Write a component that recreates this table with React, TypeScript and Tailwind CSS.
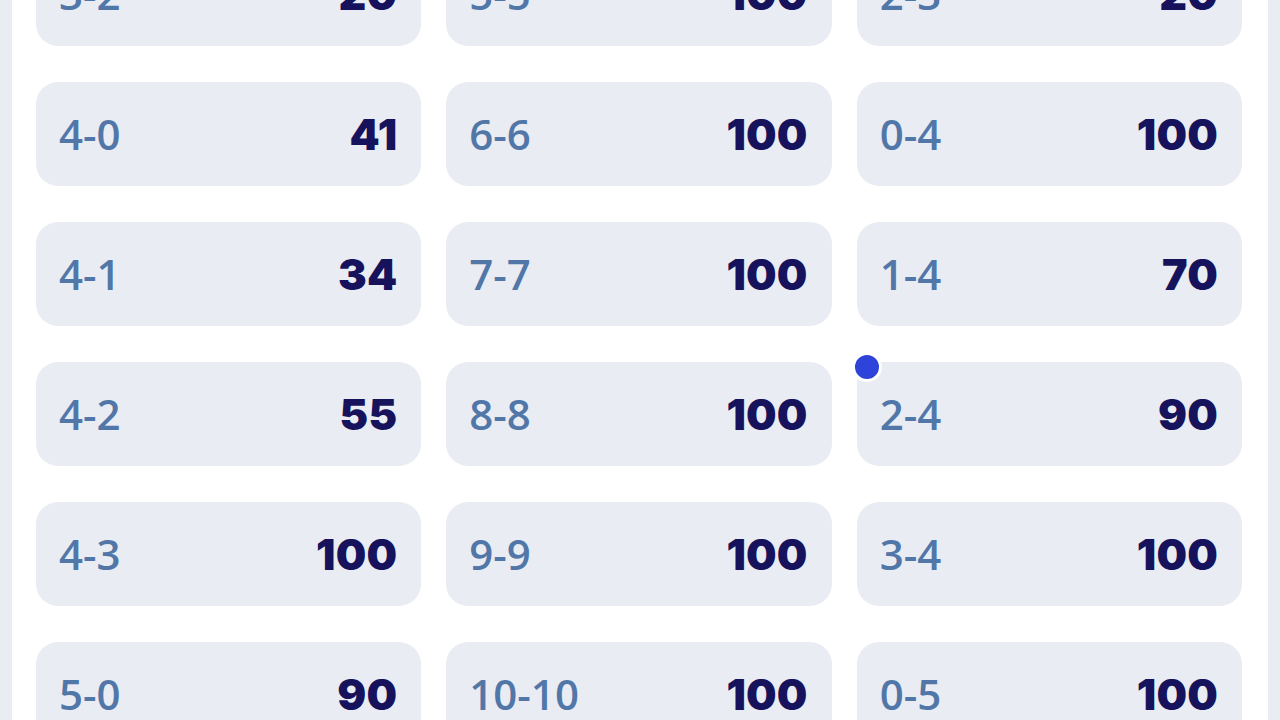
import React from 'react';

const rows: [string, number, string, number, string, number][] = [
  ['3-2', 20, '5-5', 100, '2-3', 20],
  ['4-0', 41, '6-6', 100, '0-4', 100],
  ['4-1', 34, '7-7', 100, '1-4', 70],
  ['4-2', 55, '8-8', 100, '2-4', 90],
  ['4-3', 100, '9-9', 100, '3-4', 100],
  ['5-0', 90, '10-10', 100, '0-5', 100],
  ['5-1', 80, '11-11', 100, '1-5', 60],
];

const ScoreCard = ({ score, odds, marked }: { score: string; odds: number; marked?: boolean }) => {
  return (
    <div className="relative flex h-[104px] items-center justify-between rounded-[22px] bg-[#e9ecf3] pl-[23px] pr-6">
      {marked && (
        <span className="absolute -left-[5px] -top-[10px] h-[30px] w-[30px] rounded-full border-[3px] border-white bg-[#2e43d9]" />
      )}
      <span className="text-[42px] font-semibold leading-none text-[#5177a8] [font-family:'Open_Sans',sans-serif]">
        {score}
      </span>
      <span className="text-[43px] font-black leading-none tracking-[0.005em] text-[#16135c] [font-family:Inter,sans-serif]">
        {odds}
      </span>
    </div>
  );
};

export default function App() {
  return (
    <div className="h-[720px] overflow-hidden bg-[#e9ecf3] px-3">
      <div className="flex h-full flex-col bg-white pl-6 pr-[26px]">
        <div className="-mt-[58px] grid grid-cols-3 gap-x-[25px] gap-y-9">
          {rows.map((r) => (
            <React.Fragment key={r[0]}>
              <ScoreCard score={r[0]} odds={r[1]} />
              <ScoreCard score={r[2]} odds={r[3]} />
              <ScoreCard score={r[4]} odds={r[5]} marked={r[4] === '2-4'} />
            </React.Fragment>
          ))}
        </div>
      </div>
    </div>
  );
}
